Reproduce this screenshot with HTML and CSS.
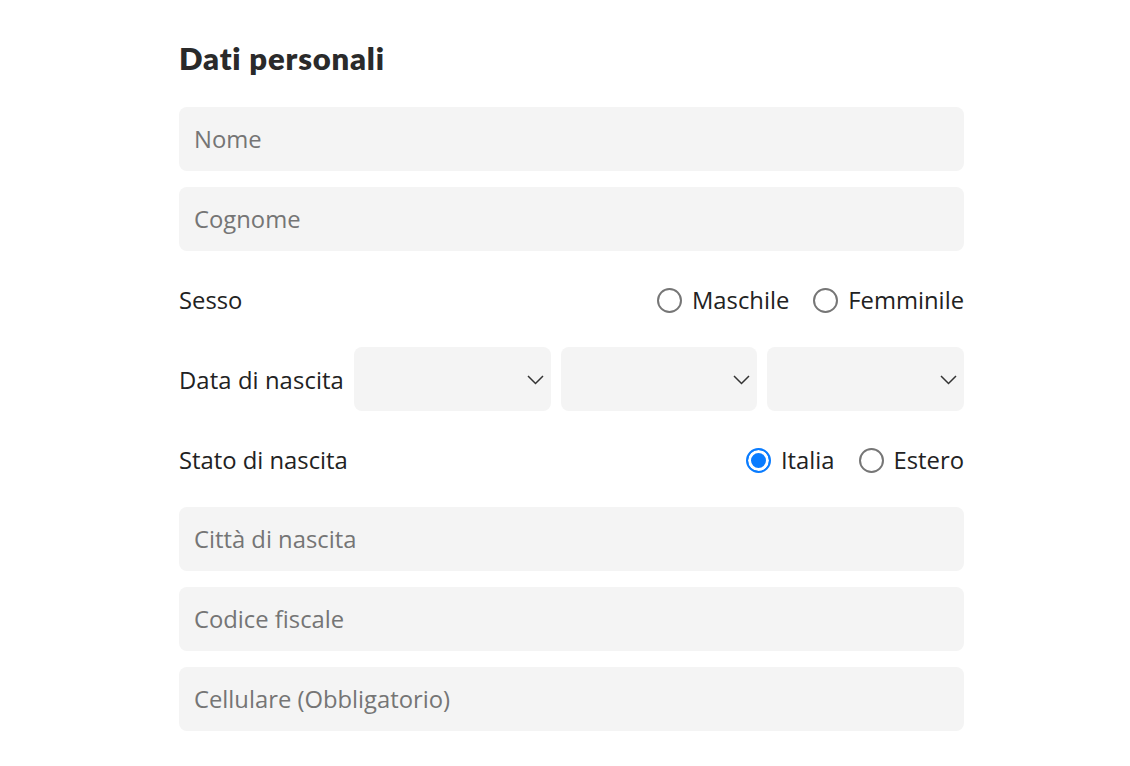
FILE: index.html
```html
<!DOCTYPE html>
<html lang="it">
<head>
<meta charset="utf-8">
<title>Dati personali</title>
<link rel="stylesheet" href="styles.css">
</head>
<body>
<main class="form">
  <h1 class="title">Dati personali</h1>
  <div class="field"><span class="ph">Nome</span></div>
  <div class="field"><span class="ph">Cognome</span></div>
  <div class="row">
    <span class="label">Sesso</span>
    <div class="radios">
      <span class="radio"><span class="circle"></span>Maschile</span>
      <span class="radio"><span class="circle"></span>Femminile</span>
    </div>
  </div>
  <div class="row date-row">
    <span class="label">Data di nascita</span>
    <div class="select"><svg class="chev" viewBox="0 0 17 10" width="17" height="10"><path d="M1 1 L8.5 8.5 L16 1" fill="none" stroke="#333" stroke-width="1.5"/></svg></div>
    <div class="select"><svg class="chev" viewBox="0 0 17 10" width="17" height="10"><path d="M1 1 L8.5 8.5 L16 1" fill="none" stroke="#333" stroke-width="1.5"/></svg></div>
    <div class="select"><svg class="chev" viewBox="0 0 17 10" width="17" height="10"><path d="M1 1 L8.5 8.5 L16 1" fill="none" stroke="#333" stroke-width="1.5"/></svg></div>
  </div>
  <div class="row">
    <span class="label">Stato di nascita</span>
    <div class="radios">
      <span class="radio"><span class="circle checked"></span>Italia</span>
      <span class="radio"><span class="circle"></span>Estero</span>
    </div>
  </div>
  <div class="field"><span class="ph">Città di nascita</span></div>
  <div class="field"><span class="ph">Codice fiscale</span></div>
  <div class="field"><span class="ph">Cellulare (Obbligatorio)</span></div>
</main>
</body>
</html>
```
FILE: styles.css
```css
html, body {
  margin: 0;
  padding: 0;
  background: #fff;
}
body {
  font-family: "Open Sans", "Liberation Sans", sans-serif;
  color: #222;
}
.form {
  width: 785px;
  margin-left: 179px;
  padding-top: 38px;
  display: flex;
  flex-direction: column;
  gap: 16px;
}
.title {
  font-family: Lato, "Open Sans", sans-serif;
  font-weight: 800;
  font-size: 31px;
  line-height: 40px;
  margin: 0 0 13px 0;
  color: #2a2a2a;
  letter-spacing: 0.8px;
}
.field {
  height: 64px;
  background: #f4f4f4;
  border-radius: 8px;
  display: flex;
  align-items: center;
  padding-left: 15px;
}
.ph {
  font-size: 23.8px;
  color: #757575;
}
.row {
  height: 64px;
  display: flex;
  align-items: center;
  justify-content: space-between;
}
.label {
  font-size: 23.8px;
  color: #222;
  padding-top: 2px;
}
.radios {
  display: flex;
  gap: 24px;
  padding-top: 2px;
}
.radio {
  display: flex;
  align-items: center;
  gap: 10px;
  font-size: 23.8px;
  color: #222;
}
.circle {
  width: 21px;
  height: 21px;
  border: 2px solid #767676;
  border-radius: 50%;
  box-sizing: content-box;
  background: #fff;
}
.circle.checked {
  border-color: #0a7cff;
  background: #0a7cff;
  box-shadow: inset 0 0 0 3px #fff;
}
.date-row {
  justify-content: flex-start;
  gap: 10px;
}
.date-row .label {
  letter-spacing: 0.1px;
}
.select {
  flex: 1;
  height: 64px;
  background: #f4f4f4;
  border-radius: 8px;
  display: flex;
  align-items: center;
  justify-content: flex-end;
  padding-right: 7px;
}
.chev {
  display: block;
  margin-top: 1px;
}
```
